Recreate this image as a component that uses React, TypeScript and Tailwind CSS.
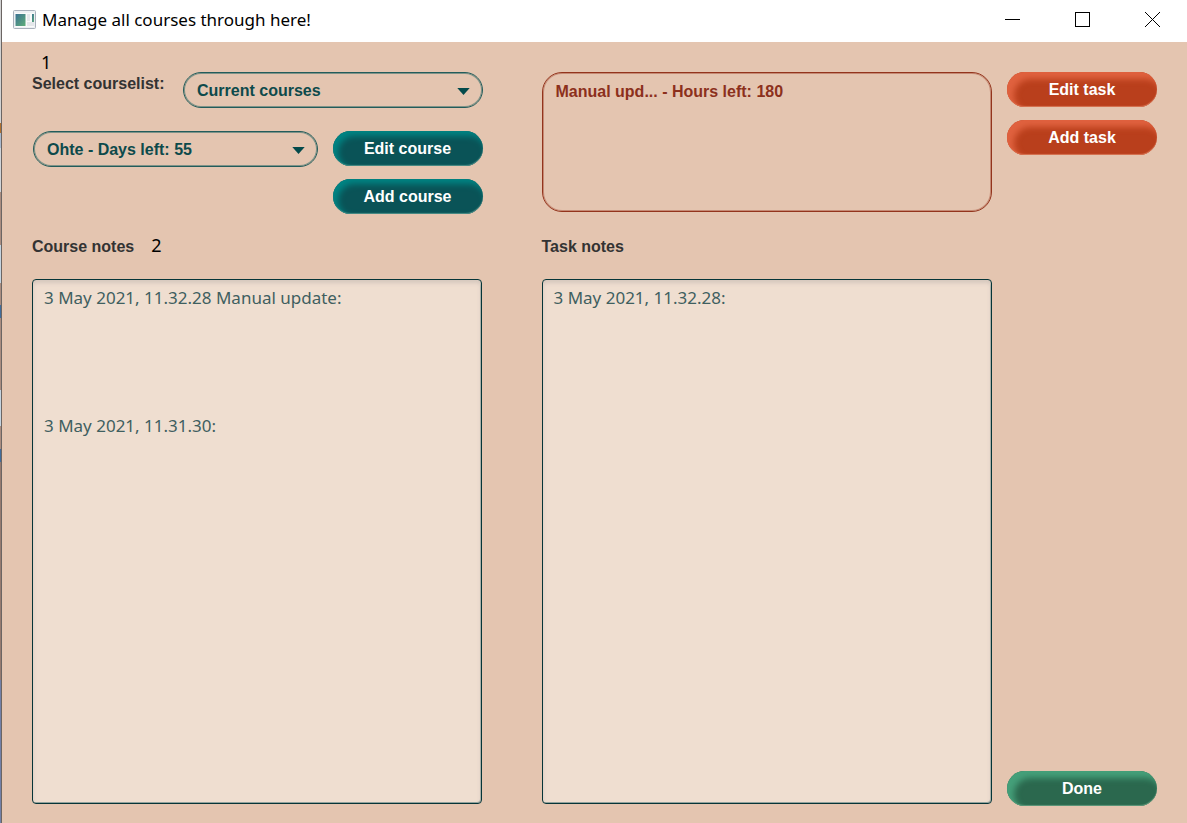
import type { ReactNode } from "react";

const pill =
  "h-[35px] w-[150px] shrink-0 rounded-full pt-px text-center text-base font-bold text-white";

const tones = {
  teal: "bg-[#0a5357] shadow-[inset_4px_4px_6px_1px_#008584,inset_0_-1px_1px_#5a8f88]",
  orange: "bg-[#b93f1c] shadow-[inset_6px_6px_6px_1px_#e0623f,inset_0_-1px_1px_#d87858]",
  green: "bg-[#2b684e] shadow-[inset_6px_6px_6px_1px_#45a07a,inset_0_-1px_1px_#629a7d]",
};

function PillButton({ tone, children }: { tone: keyof typeof tones; children: ReactNode }) {
  return (
    <button type="button" className={`${pill} ${tones[tone]}`}>
      {children}
    </button>
  );
}

function PillSelect({ id, label, option }: { id: string; label?: string; option: string }) {
  return (
    <div className="relative min-w-0 flex-1">
      <select
        id={id}
        aria-label={label}
        className="h-9 w-full appearance-none rounded-full border border-[#235c5a] bg-transparent px-[13px] pt-px text-base font-bold text-[#0d4a4b] shadow-[inset_0_0_0_1px_#7f9388]"
      >
        <option>{option}</option>
      </select>
      <svg
        className="pointer-events-none absolute top-4 right-[13px]"
        width="13"
        height="7"
        viewBox="0 0 13 7"
        aria-hidden="true"
      >
        <path d="M0.3 0H12.7L6.5 7Z" fill="#034a4b" />
      </svg>
    </div>
  );
}

const notes =
  "block w-full min-h-0 flex-1 resize-none rounded border border-[#063538] bg-[#efded0] px-[11px] py-[2px] font-['Noto_Sans',sans-serif] text-[17px] leading-8 text-[#3f5f60] shadow-[inset_0_3px_4px_#d5c7bd,inset_-1px_-1px_0_#8fa19a] outline-none";

export default function App() {
  return (
    <div className="flex min-h-screen font-['Liberation_Sans',sans-serif]">
      <div className="w-[2px] shrink-0 border-r border-[#6b6563] bg-[linear-gradient(#d2d2d2_0_123px,#b0712e_123px_133px,#a9b9ce_133px_148px,#d0d4d8_148px_192px,#aa8d80_192px_245px,#c4d3df_245px_283px,#aa8d80_283px_305px,#416c9b_305px_318px,#aa8d80_318px_390px,#c4d3df_390px_426px,#aa8d80_426px_449px,#416c9b_449px_462px,#967b70_462px_680px,#7180a8_680px)]" />
      <div className="flex min-w-0 flex-1 flex-col bg-[#e4c5b0]">
        <header className="flex h-[42px] shrink-0 items-center bg-white pb-1 pl-[11px]">
          <svg width="23" height="19" viewBox="0 0 23 19" aria-hidden="true">
            <defs>
              <linearGradient id="pane" x1="0" y1="0" x2="1" y2="1">
                <stop offset="0" stopColor="#3b7193" />
                <stop offset="1" stopColor="#5fae78" />
              </linearGradient>
            </defs>
            <rect x="0.5" y="0.5" width="22" height="18" rx="1" fill="#edf0f3" stroke="#a9b0bb" />
            <rect x="2" y="3" width="19" height="14" fill="#fafafa" />
            <rect x="2.5" y="4" width="10" height="12" fill="url(#pane)" />
            <rect x="14" y="4" width="3" height="7" fill="#e4e7ea" />
            <rect x="14" y="12" width="7" height="4" fill="#e4e7ea" />
            <rect x="19" y="4" width="2" height="8" fill="url(#pane)" />
          </svg>
          <h1 className="ml-[6px] flex-1 pt-[2px] font-['Noto_Sans',sans-serif] text-[17px] leading-6 text-black">
            Manage all courses through here!
          </h1>
          <div className="flex">
            <button type="button" aria-label="Minimize" className="flex h-[38px] w-[70px] items-center justify-center">
              <svg width="15" height="15" viewBox="0 0 15 15" stroke="#000">
                <path d="M0 7.5H15" />
              </svg>
            </button>
            <button type="button" aria-label="Maximize" className="flex h-[38px] w-[70px] items-center justify-center">
              <svg width="15" height="15" viewBox="0 0 15 15" stroke="#000" fill="none">
                <rect x="0.5" y="0.5" width="14" height="14" />
              </svg>
            </button>
            <button type="button" aria-label="Close" className="flex h-[38px] w-[70px] items-center justify-center">
              <svg width="15" height="15" viewBox="0 0 15 15" stroke="#000">
                <path d="M0 0L15 15M15 0L0 15" />
              </svg>
            </button>
          </div>
        </header>

        <main className="flex flex-1 px-[30px] pt-[30px] pb-[17px]">
          <section className="mr-[59px] flex min-w-0 flex-1 flex-col pb-[2px]">
            <div className="relative flex h-[59px]">
              <span className="absolute -top-[22px] left-[9px] font-['Noto_Sans',sans-serif] text-lg leading-6 text-black">
                1
              </span>
              <label htmlFor="courselist" className="w-[151px] text-base font-bold text-[#333]">
                Select courselist:
              </label>
              <PillSelect id="courselist" option="Current courses" />
            </div>
            <div className="flex gap-[15px] pl-px">
              <PillSelect id="course" label="Course" option="Ohte - Days left: 55" />
              <div className="flex flex-col gap-[13px]">
                <PillButton tone="teal">Edit course</PillButton>
                <PillButton tone="teal">Add course</PillButton>
              </div>
            </div>
            <div className="flex h-[65px] items-center gap-[17px] text-[#333]">
              <label htmlFor="course-notes" className="text-base font-bold">
                Course notes
              </label>
              <span className="pb-1 font-['Noto_Sans',sans-serif] text-lg leading-6 text-black">2</span>
            </div>
            <div className="flex flex-1 pr-px">
              <textarea
                id="course-notes"
                className={notes}
                defaultValue={"3 May 2021, 11.32.28 Manual update:\n\n\n\n3 May 2021, 11.31.30:"}
              />
            </div>
          </section>

          <section className="mr-[15px] flex min-w-0 flex-1 flex-col pb-[2px]">
            <ul
              aria-label="Tasks"
              className="h-[140px] rounded-[20px] border border-[#93341c] px-[13px] py-[7px] text-base font-bold text-[#8c301c] shadow-[inset_0_0_0_1px_#c58a74]"
            >
              <li>Manual upd... - Hours left: 180</li>
            </ul>
            <div className="mt-[2px] flex h-[65px] items-center text-[#333]">
              <label htmlFor="task-notes" className="text-base font-bold">
                Task notes
              </label>
            </div>
            <div className="flex flex-1">
              <textarea id="task-notes" className={notes} defaultValue="3 May 2021, 11.32.28:" />
            </div>
          </section>

          <aside className="flex flex-col gap-[13px]">
            <PillButton tone="orange">Edit task</PillButton>
            <PillButton tone="orange">Add task</PillButton>
            <div className="mt-auto flex">
              <PillButton tone="green">Done</PillButton>
            </div>
          </aside>
        </main>
      </div>
    </div>
  );
}
